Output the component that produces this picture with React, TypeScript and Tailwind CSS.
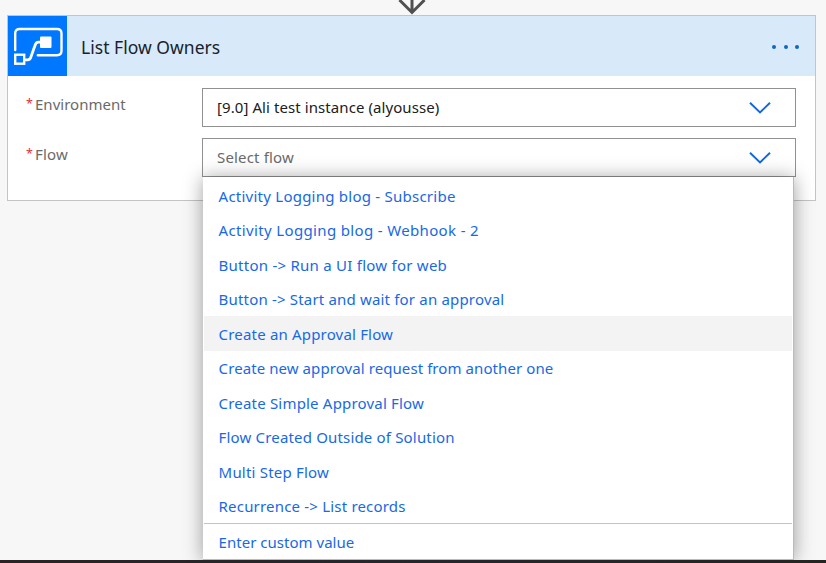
const flows = [
  { name: 'Activity Logging blog - Subscribe', tracking: 'tracking-[0.24px]' },
  { name: 'Activity Logging blog - Webhook - 2', tracking: 'tracking-[0.35px]' },
  { name: 'Button -> Run a UI flow for web', tracking: 'tracking-[0.25px]' },
  { name: 'Button -> Start and wait for an approval', tracking: 'tracking-[0.18px]' },
  { name: 'Create an Approval Flow', tracking: 'tracking-[0.18px]', active: true },
  { name: 'Create new approval request from another one', tracking: 'tracking-[0.08px]' },
  { name: 'Create Simple Approval Flow', tracking: 'tracking-[0.19px]' },
  { name: 'Flow Created Outside of Solution', tracking: 'tracking-[0.17px]' },
  { name: 'Multi Step Flow', tracking: 'tracking-[0.2px]' },
  { name: 'Recurrence -> List records', tracking: 'tracking-[0.19px]' },
];

function Chevron() {
  return (
    <svg className="mr-6 h-3 w-[22px] shrink-0" viewBox="0 0 22 12" fill="none" stroke="#1267e0" strokeWidth="1.9">
      <path d="M1 0.7 L11 10.5 L21 0.7" />
    </svg>
  );
}

function FlowIcon() {
  return (
    <div className="h-[60px] w-[59px] shrink-0 bg-[#0077ff]">
      <svg viewBox="0 0 59 60" className="h-full w-full" fill="none" stroke="white" strokeWidth="2.4">
        <path d="M7.2 34 V17.5 Q7.2 13 11.7 13 H49 Q53.5 13 53.5 17.5 V34.7 Q53.5 39.2 49 39.2 H29.8" strokeLinecap="round" />
        <rect x="7.2" y="38.7" width="9" height="9" />
        <path d="M17 43.8 H19.5 Q21.8 43.8 22.7 41.5 L27 29.5 Q28 26.2 30.5 26.2 H33" strokeWidth="2.8" />
        <rect x="32" y="20.5" width="11.5" height="11.5" rx="1" fill="white" stroke="none" />
      </svg>
    </div>
  );
}

function Label({ text, tracking }: { text: string; tracking: string }) {
  return (
    <div className="flex w-[176px] shrink-0 pt-1 leading-6 text-[#6a6a6a]">
      <span className="w-[9px] text-[12.5px] text-[#e0303c]">*</span>
      <span className={tracking}>{text}</span>
    </div>
  );
}

export default function App() {
  return (
    <div className="flex h-[563px] w-[826px] flex-col overflow-hidden bg-[#f7f7f7] font-['Noto_Sans','Open_Sans',sans-serif] text-[15px]">
      <div className="flex h-[15px] shrink-0 justify-center pr-[3px]">
        <svg className="h-[15px] w-7" viewBox="0 0 28 15" fill="none" stroke="#505050" strokeWidth="3">
          <path d="M14 0 V12.5 M1.5 0 L14 12.5 L26.5 0" />
        </svg>
      </div>
      <section className="ml-[7px] h-[186px] w-[809px] shrink-0 border border-[#c4c4c4] bg-white">
        <header className="flex h-[60px] items-center bg-[#d8eafa]">
          <FlowIcon />
          <h1 className="ml-[14px] flex-1 pt-[2px] text-[17.5px] tracking-[0.03px] text-[#17222c]">List Flow Owners</h1>
          <div className="mr-4 flex gap-[7.3px] pt-[2px]">
            <span className="size-1 rounded-full bg-[#1267bd]" />
            <span className="size-1 rounded-full bg-[#1267bd]" />
            <span className="size-1 rounded-full bg-[#1267bd]" />
          </div>
        </header>
        <div className="flex flex-col gap-[11px] pt-3 pl-[18px]">
          <div className="flex">
            <Label text="Environment" tracking="tracking-[0.01px]" />
            <div className="flex h-[39px] w-[594px] items-center justify-between border border-[#919191] pl-[14px]">
              <span className="tracking-[0.08px] text-[#202020]">[9.0] Ali test instance (alyousse)</span>
              <Chevron />
            </div>
          </div>
          <div className="flex">
            <Label text="Flow" tracking="tracking-[0.2px]" />
            <div className="relative flex h-[39px] w-[594px] items-center justify-between border border-[#919191] pl-[14px]">
              <span className="tracking-[0.17px] text-[#6a6a6a]">Select flow</span>
              <Chevron />
              <div className="absolute top-[38px] left-0 h-[383px] w-[591px] border-r border-b border-[#bbb] bg-white text-[#1769e6] shadow-[0_1px_18px_rgba(0,0,0,0.38)]">
                <ul className="px-px pt-[1.6px]">
                  {flows.map((f) => (
                    <li key={f.name} className={`flex h-[34.45px] items-center pt-[0.9px] pl-[14.6px] ${f.active ? 'bg-[#f3f3f3]' : ''}`}>
                      <span className={f.tracking}>{f.name}</span>
                    </li>
                  ))}
                </ul>
                <div className="mx-px flex h-9 items-center border-t border-[#c4c4c4] pt-px pl-[14.6px]">
                  <span className="tracking-[0.02px]">Enter custom value</span>
                </div>
              </div>
            </div>
          </div>
        </div>
      </section>
      <div className="relative mt-auto h-[3px] shrink-0 bg-linear-to-r from-[#2a2224] via-[#25262b] to-[#262323]" />
    </div>
  );
}
